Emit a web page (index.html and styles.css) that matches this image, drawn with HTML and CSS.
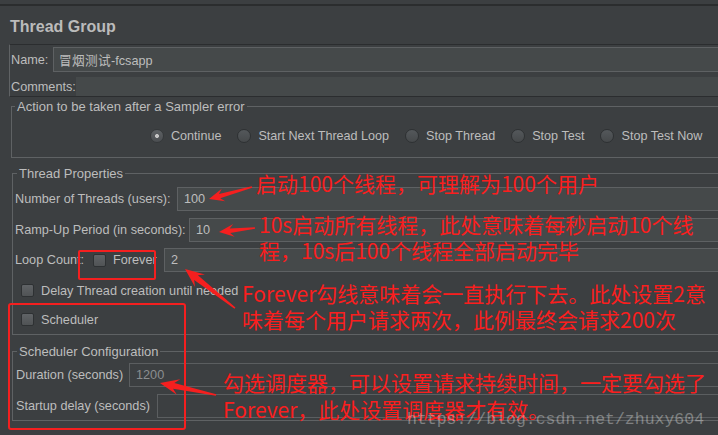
FILE: index.html
```html
<!DOCTYPE html>
<html lang="zh-CN">
<head>
<meta charset="utf-8">
<title>Thread Group</title>
<link rel="stylesheet" href="styles.css">
</head>
<body>
<div class="page">
  <div class="topbar"></div>
  <h1 class="title">Thread Group</h1>

  <div class="name-panel">
    <div class="row name-row">
      <span class="lbl name-lbl">Name:</span>
      <div class="field name-field">冒烟测试-fcsapp</div>
    </div>
    <div class="row comments-row">
      <span class="lbl comments-lbl">Comments:</span>
      <div class="field plain"></div>
    </div>
  </div>

  <fieldset class="group action-group">
    <legend>Action to be taken after a Sampler error</legend>
    <div class="radios">
      <span class="opt"><span class="radio on"></span>Continue</span>
      <span class="opt"><span class="radio"></span>Start Next Thread Loop</span>
      <span class="opt"><span class="radio"></span>Stop Thread</span>
      <span class="opt"><span class="radio"></span>Stop Test</span>
      <span class="opt"><span class="radio"></span>Stop Test Now</span>
    </div>
  </fieldset>

  <fieldset class="group props-group">
    <legend>Thread Properties</legend>
    <div class="props-body">
      <div class="row prop-row">
        <span class="lbl w-threads">Number of Threads (users):</span>
        <div class="field">100</div>
      </div>
      <div class="row prop-row ramp-row">
        <span class="lbl w-ramp">Ramp-Up Period (in seconds):</span>
        <div class="field">10</div>
      </div>
      <div class="row prop-row loop-row">
        <span class="lbl w-loop">Loop Count:</span>
        <span class="check"></span>
        <span class="lbl w-forever">Forever</span>
        <div class="field">2</div>
      </div>
      <div class="row check-row delay-row">
        <span class="check"></span>
        <span class="lbl">Delay Thread creation until needed</span>
      </div>
      <div class="row check-row sched-row">
        <span class="check"></span>
        <span class="lbl">Scheduler</span>
      </div>
    </div>
  </fieldset>

  <fieldset class="group sched-group">
    <legend>Scheduler Configuration</legend>
    <div class="sched-body">
      <div class="row prop-row">
        <span class="lbl w-duration">Duration (seconds)</span>
        <div class="field off">1200</div>
      </div>
      <div class="row prop-row second">
        <span class="lbl w-startup">Startup delay (seconds)</span>
        <div class="field off"></div>
      </div>
    </div>
  </fieldset>

  <p class="note note-1">启动100个线程，可理解为100个用户</p>
  <p class="note note-2">10s启动所有线程，此处意味着每秒启动10个线<br>程，10s后100个线程全部启动完毕</p>
  <p class="note note-3">Forever勾线意味着会一直执行下去。此处设置2意<br>味着每个用户请求两次，此例最终会请求200次</p>
  <p class="note note-4">勾选调度器，可以设置请求持续时间，一定要勾选了<br>Forever，此处设置调度器才有效。</p>

  <div class="watermark">https://blog.csdn.net/zhuxy604</div>

  <svg class="marks" width="718" height="435" viewBox="0 0 718 435" aria-hidden="true">
    <g fill="none" stroke="#f51f1f" stroke-width="2">
      <rect x="79" y="247" width="76" height="28" rx="1"/>
      <rect x="9" y="300" width="176" height="125" rx="2"/>
    </g>
    <g fill="#f51f1f">
      <polygon points="0,0 15,-6.5 11,-2.2 44.6,-0.7 44.6,0.7 11,2.2 15,6.5" transform="translate(209 195) rotate(-15.6)"/>
      <polygon points="0,0 15,-6.5 11,-2.2 36.2,-0.7 36.2,0.7 11,2.2 15,6.5" transform="translate(219 228) rotate(-6.3)"/>
      <polygon points="0,0 19,-8 14,-3 63.4,-0.8 63.4,0.8 14,3 19,8" transform="translate(185 265) rotate(38)"/>
      <polygon points="0,0 19,-8 14,-3 57.3,-0.8 57.3,0.8 14,3 19,8" transform="translate(160 379) rotate(12.1)"/>
    </g>
  </svg>
</div>
</body>
</html>
```

FILE: styles.css
```css
html, body {
  margin: 0;
  height: 100%;
  overflow: hidden;
  background: #3c3f41;
}

body {
  font-family: "Liberation Sans", Arial, sans-serif;
  font-size: 12.7px;
  color: #bdbdbd;
}

.page {
  position: relative;
  width: 850px;
  height: 435px;
}

.topbar {
  height: 2px;
  margin-top: 4px;
  background: #2b2d2e;
}

.title {
  margin: 0;
  box-sizing: border-box;
  height: 38px;
  padding: 11px 0 0 10px;
  font-size: 16px;
  line-height: 20px;
  font-weight: bold;
  color: #bbbbbb;
}

/* name / comments block */
.name-panel {
  margin-left: 9px;
  border: 1px solid #2b2d2f;
  border-left-color: #606365;
  border-right: none;
  padding: 2px 0 0 1px;
}

.row {
  display: flex;
  align-items: center;
}

.lbl {
  white-space: nowrap;
  flex: none;
}

.name-row { height: 25px; }
.comments-row { height: 19px; margin-top: 5px; }
.name-lbl { width: 42px; }
.comments-lbl { width: 65px; }

.field {
  flex: 1;
  box-sizing: border-box;
  height: 100%;
  display: flex;
  align-items: center;
  padding-left: 6px;
  background: #45494a;
  border: 1px solid #5e6163;
  border-right: none;
  color: #bdbdbd;
}

.name-field { padding-left: 5px; }
.field.plain { border: none; }

.field.off {
  background: #3c3f41;
  border-color: #5b5e60;
  color: #8b8e90;
}

/* titled groups */
.group {
  margin: 0;
  padding: 0;
  min-width: 0;
  border: 1px solid #5f6264;
  border-right: none;
}

.group legend {
  margin-left: 3px;
  padding: 0 2px;
  font-size: 13px;
  line-height: 15px;
}

.action-group { margin: 2px 0 0 11px; }
.props-group { margin: 8px 0 0 12px; }
.props-group legend,
.sched-group legend { margin-left: 4px; }
.sched-group { margin: 9px 0 0 12px; }

/* radio buttons */
.radios {
  display: flex;
  align-items: center;
  gap: 16px;
  height: 16px;
  padding: 14px 0 13px 138px;
  font-size: 12.6px;
}

.opt {
  display: flex;
  align-items: center;
  gap: 7px;
  white-space: nowrap;
}

.radio {
  flex: none;
  width: 14px;
  height: 14px;
  box-sizing: border-box;
  border-radius: 50%;
  border: 1px solid #2e3133;
  background: linear-gradient(#54585b, #46494b);
}

.radio.on {
  border-color: #35383a;
  background:
    radial-gradient(circle, #c4c4c4 0 1.6px, transparent 2.3px),
    linear-gradient(#5d6164, #4b4e51);
}

/* check boxes */
.check {
  flex: none;
  width: 13px;
  height: 13px;
  box-sizing: border-box;
  border: 1px solid #2e3133;
  border-radius: 2px;
  background: linear-gradient(#606366, #505355);
}

/* thread properties */
.props-body { padding: 6px 0 6px 2px; }

.prop-row { height: 24px; }

.w-threads { width: 162px; }
.w-ramp { width: 174px; }
.w-loop { width: 78px; }
.w-forever { width: 51px; margin-left: 7px; }

.ramp-row { margin-top: 7px; }
.loop-row { margin-top: 6px; }

.check-row {
  height: 17px;
  gap: 7px;
  padding-left: 6px;
}

.delay-row { margin-top: 10px; }
.sched-row { margin-top: 12px; }

/* scheduler configuration */
.sched-body { padding: 4px 0 2px 3px; }
.w-duration { width: 113px; }
.w-startup { width: 141px; }
.prop-row.second { margin-top: 7px; }

/* annotations */
.note {
  position: absolute;
  margin: 0;
  font-family: "Noto Sans CJK SC", sans-serif;
  font-size: 21px;
  line-height: 26px;
  color: #fa1e1e;
  white-space: nowrap;
}

.note-1 { left: 256px; top: 166px; }
.note-2 { left: 259px; top: 207px; }
.note-3 { left: 242px; top: 276px; }
.note-4 { left: 223px; top: 365px; line-height: 27px; }

.watermark {
  position: absolute;
  left: 407px;
  top: 406px;
  font-family: "Liberation Mono", monospace;
  font-size: 16.5px;
  line-height: 20px;
  color: rgba(255, 255, 255, 0.34);
  white-space: nowrap;
}

.marks {
  position: absolute;
  left: 0;
  top: 0;
  pointer-events: none;
}
```
